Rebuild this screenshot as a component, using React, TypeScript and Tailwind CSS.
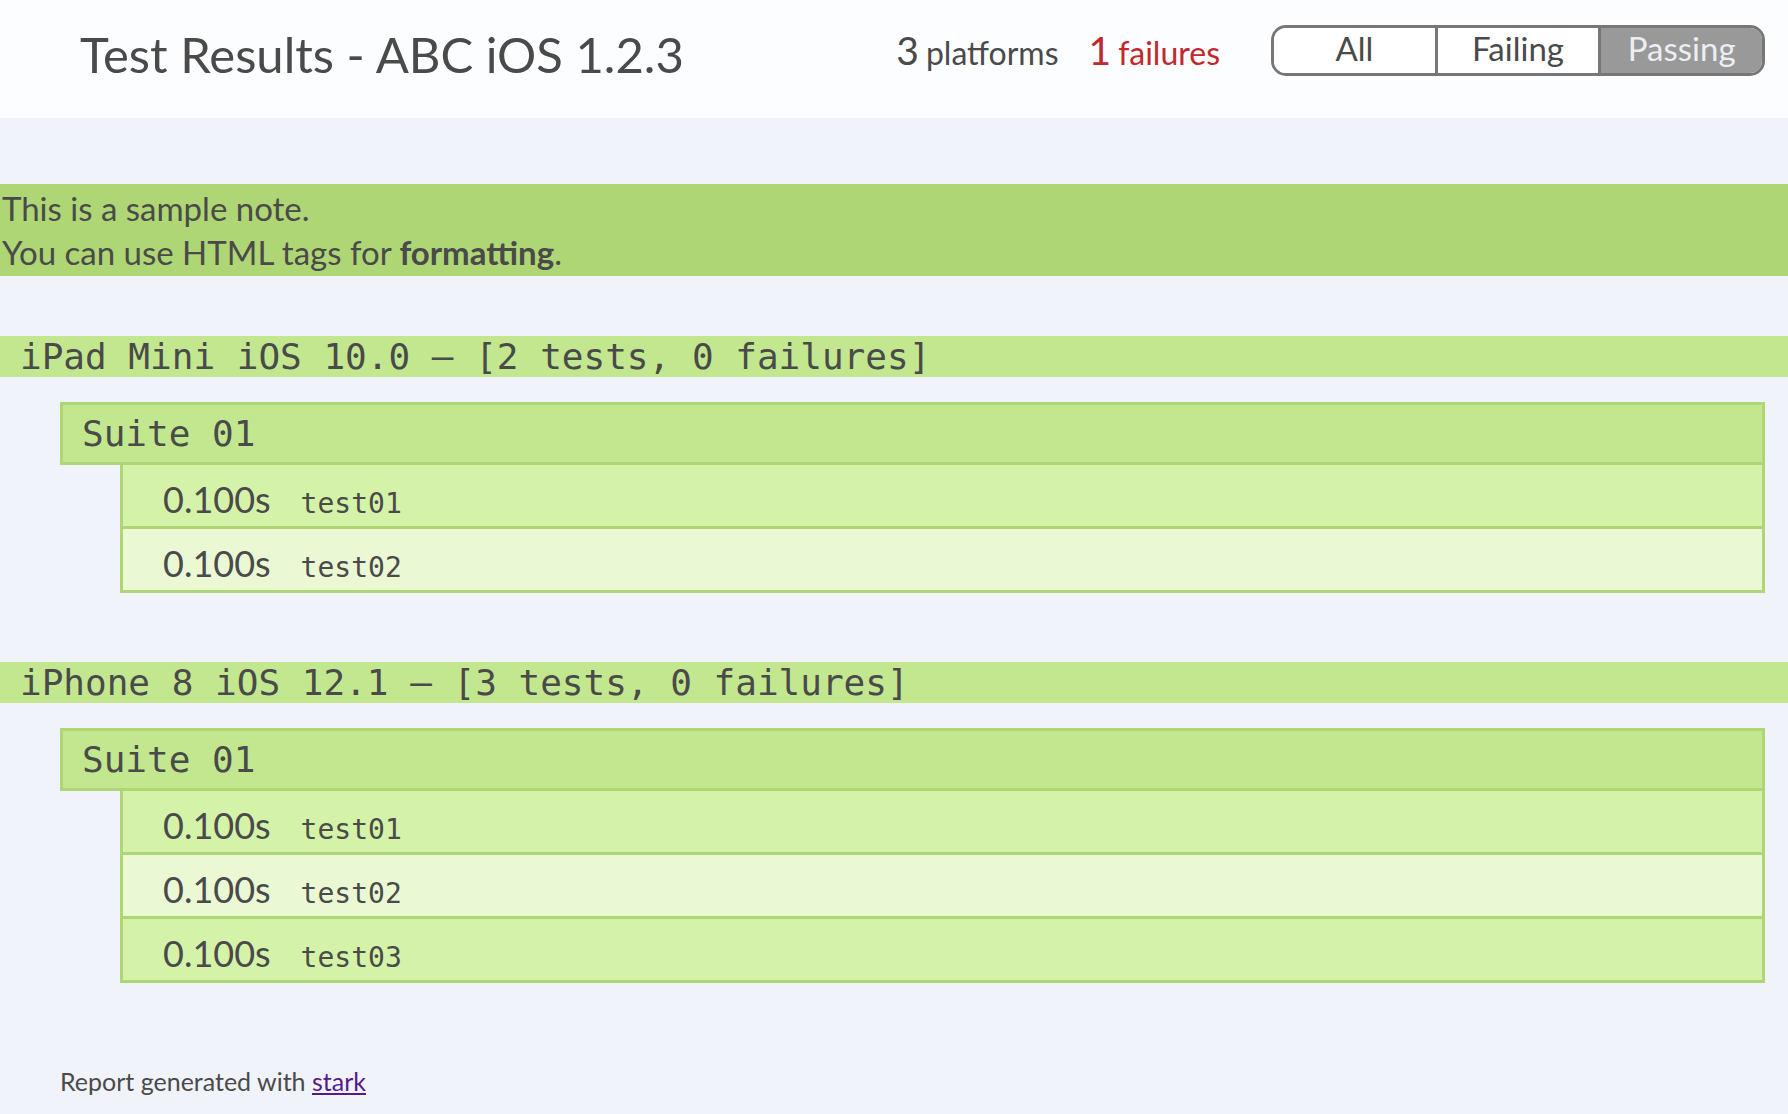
import React from 'react'

type Test = { time: string; name: string }
type Suite = { name: string; tests: Test[] }
type Platform = { title: string; suites: Suite[] }

const PLATFORMS: Platform[] = [
  {
    title: 'iPad Mini iOS 10.0 – [2 tests, 0 failures]',
    suites: [
      {
        name: 'Suite 01',
        tests: [
          { time: '0.100s', name: 'test01' },
          { time: '0.100s', name: 'test02' },
        ],
      },
    ],
  },
  {
    title: 'iPhone 8 iOS 12.1 – [3 tests, 0 failures]',
    suites: [
      {
        name: 'Suite 01',
        tests: [
          { time: '0.100s', name: 'test01' },
          { time: '0.100s', name: 'test02' },
          { time: '0.100s', name: 'test03' },
        ],
      },
    ],
  },
]

const sans = "font-['Lato','Noto_Sans',sans-serif]"
const mono = "font-['DejaVu_Sans_Mono','Liberation_Mono',monospace]"

function Toggle() {
  return (
    <div className="flex h-[51px] w-[494px] overflow-hidden rounded-[15px] border-[3px] border-[#777777] text-[33px] leading-none">
      <button className="flex-1 bg-white pb-[4px] text-[#4a4a4a]">All</button>
      <button className="flex-1 border-l-[3px] border-[#777777] bg-white pb-[4px] text-[#4a4a4a]">Failing</button>
      <button className="flex-1 border-l-[3px] border-[#777777] bg-[#999999] pb-[4px] text-[#eceef4]">Passing</button>
    </div>
  )
}

function SuiteBlock({ suite }: { suite: Suite }) {
  return (
    <div className="ml-[60px] mr-[23px]">
      <div className={`flex h-[63px] items-center border-[3px] border-[#afd674] bg-[#c2e78e] pl-[19px] text-[36px] ${mono}`}>
        {suite.name}
      </div>
      <div className="ml-[60px]">
        {suite.tests.map((t, i) => (
          <div
            key={t.name}
            className={`flex h-[64px] items-center border-x-[3px] border-b-[3px] border-[#afd674] pl-[40px] pt-[6px] ${
              i % 2 === 0 ? 'bg-[#d4f3a8]' : 'bg-[#eaf8d4]'
            }`}
          >
            <div className="flex items-baseline">
              <span className="text-[36px]">{t.time}</span>
              <span className={`ml-[30px] text-[28px] ${mono}`}>{t.name}</span>
            </div>
          </div>
        ))}
      </div>
    </div>
  )
}

export default function App() {
  return (
    <div className={`min-h-screen bg-[#f0f3fa] text-[#4a4a4a] ${sans}`}>
      {/* Header */}
      <div className="flex h-[118px] items-center bg-[#fbfdfe] pl-[80px] pr-[23px]">
        <h1 className="mt-[-10px] flex-1 text-[49px] leading-none">Test Results - ABC iOS 1.2.3</h1>
        <div className="mb-[18px] flex items-baseline">
          <span className="text-[39px]">3</span>
          <span className="ml-[7px] text-[32px]">platforms</span>
          <span className="ml-[30px] text-[39px] text-[#c0282d]">1</span>
          <span className="ml-[7px] text-[32px] text-[#c0282d]">failures</span>
        </div>
        <div className="ml-[51px] mb-[18px]">
          <Toggle />
        </div>
      </div>

      {/* Note */}
      <div className="mt-[66px] bg-[#afd674] py-[2px] pl-[2px] text-[33px] leading-[44px]">
        This is a sample note.
        <br />
        You can use HTML tags for <b>formatting</b>.
      </div>

      {/* Platforms */}
      <div className="mt-[60px] flex flex-col gap-[69px]">
        {PLATFORMS.map(p => (
          <div key={p.title}>
            <div className={`flex h-[41px] items-center bg-[#c2e78e] pl-[20px] text-[36px] whitespace-pre ${mono}`}>
              {p.title}
            </div>
            <div className="mt-[25px]">
              {p.suites.map(s => (
                <SuiteBlock key={s.name} suite={s} />
              ))}
            </div>
          </div>
        ))}
      </div>

      {/* Footer */}
      <div className="pl-[60px] pt-[80px] pb-[20px] text-[25px]">
        Report generated with{' '}
        <a href="#" className="text-[#551a8b] underline">
          stark
        </a>
      </div>
    </div>
  )
}
